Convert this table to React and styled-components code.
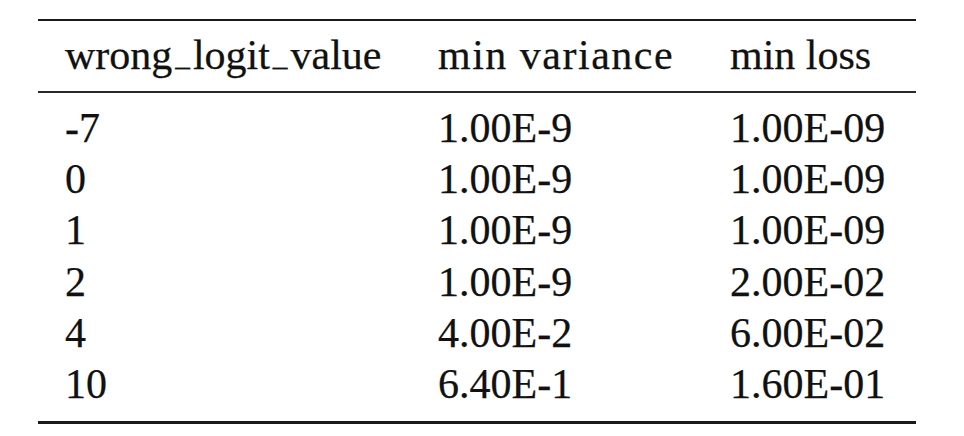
import React from "react";
import styled, { createGlobalStyle } from "styled-components";

const GlobalStyle = createGlobalStyle`
  html, body {
    margin: 0;
    padding: 0;
    background: #fff;
  }
`;

const Page = styled.div`
  padding: 19px 0 0 38px;
  font-family: "Liberation Serif", "Times New Roman", serif;
  font-size: 42px;
  color: #111;
  -webkit-text-stroke: 0.25px #111;
`;

const Table = styled.div`
  width: 878px;
  border-top: 2px solid #1a1a1a;
  border-bottom: 3px solid #1a1a1a;
`;

const Row = styled.div`
  display: grid;
  grid-template-columns: 373px 292px 213px;
  line-height: ${({ $head }) => ($head ? "51px" : "51.2px")};
`;

const Head = styled(Row)`
  padding: 9px 0 10px;
  border-bottom: 2px solid #2a2a2a;
`;

const Body = styled.div`
  padding: 10px 0 11px;
`;

const Cell = styled.div`
  padding: 0 27px;
  white-space: nowrap;
  letter-spacing: ${({ $spread }) => $spread || 0}px;
`;

/* TeX-style \_ : short rule sitting on the baseline */
const Score = styled.span`
  font-size: 0.7em;
  line-height: 1;
  padding: 0 0.1em;
  position: relative;
  top: -0.1em;
`;

const withScores = (text) =>
  text.split("_").flatMap((part, i) =>
    i === 0 ? [part] : [<Score key={i}>_</Score>, part]
  );

const columns = [
  { label: "wrong_logit_value" },
  { label: "min variance", spread: 1.5 },
  { label: "min loss" },
];

const rows = [
  ["-7", "1.00E-9", "1.00E-09"],
  ["0", "1.00E-9", "1.00E-09"],
  ["1", "1.00E-9", "1.00E-09"],
  ["2", "1.00E-9", "2.00E-02"],
  ["4", "4.00E-2", "6.00E-02"],
  ["10", "6.40E-1", "1.60E-01"],
];

const App = () => (
  <>
    <GlobalStyle />
    <Page>
      <Table>
        <Head $head>
          {columns.map((c) => (
            <Cell key={c.label} $spread={c.spread}>
              {withScores(c.label)}
            </Cell>
          ))}
        </Head>
        <Body>
          {rows.map((r) => (
            <Row key={r[0]}>
              {r.map((v, i) => (
                <Cell key={i}>{v}</Cell>
              ))}
            </Row>
          ))}
        </Body>
      </Table>
    </Page>
  </>
);

export default App;
